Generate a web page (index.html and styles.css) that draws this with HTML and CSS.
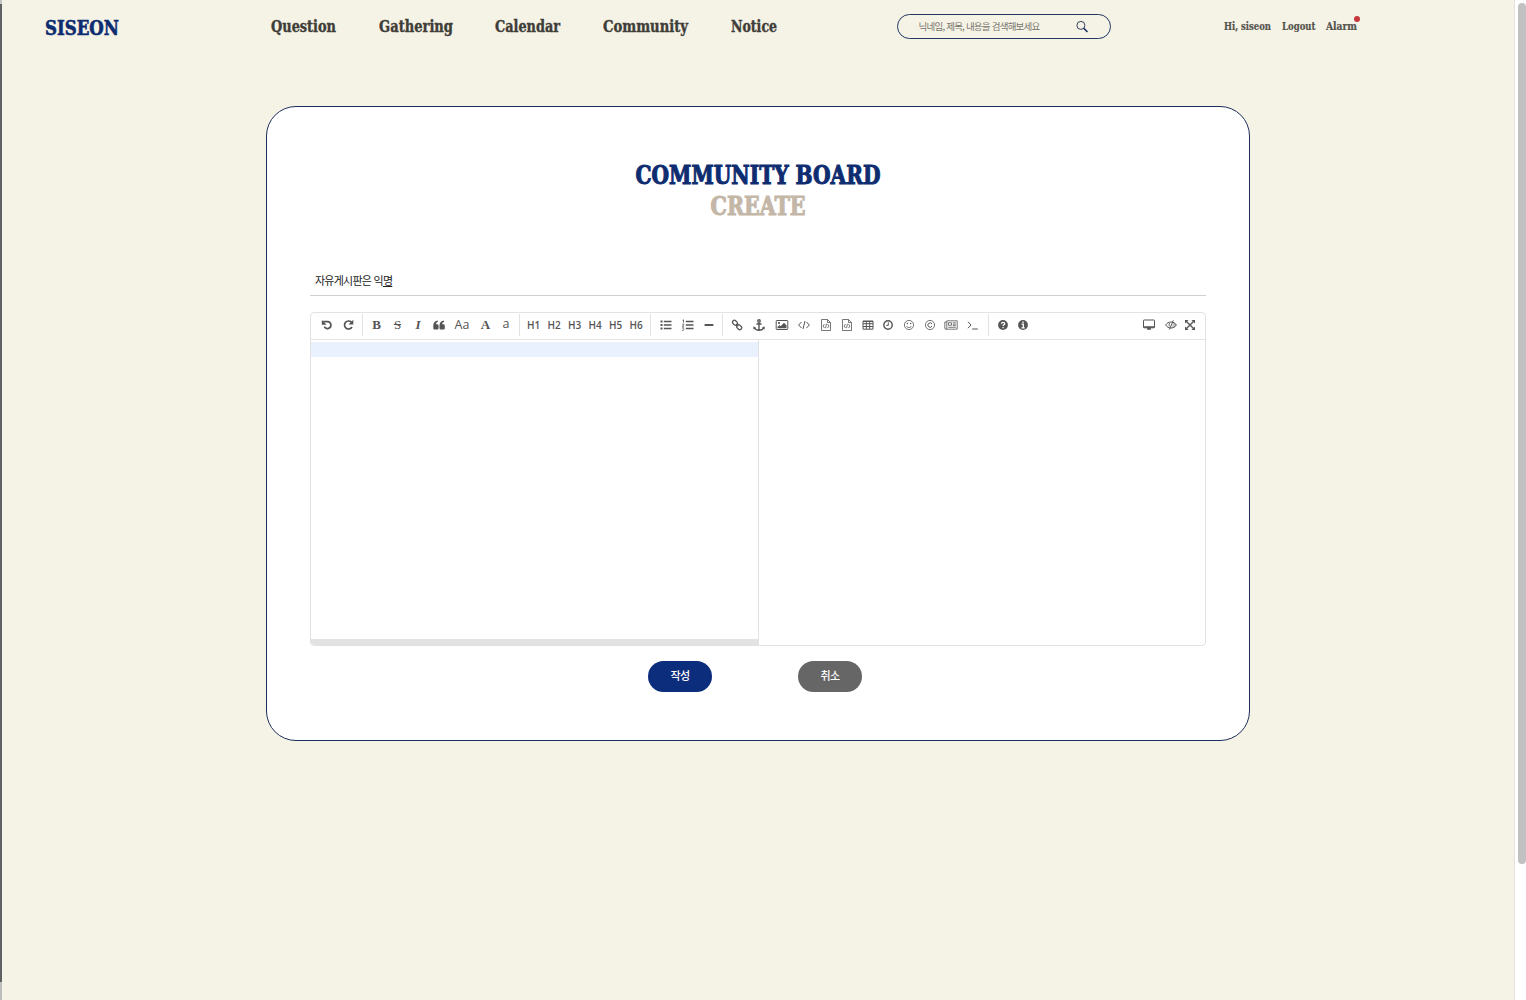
FILE: index.html
```html
<!DOCTYPE html>
<html lang="ko">
<head>
<meta charset="utf-8">
<title>SISEON</title>
<link rel="stylesheet" href="styles.css">
</head>
<body>
<div class="window-edge"></div>
<div class="page">
  <header class="topbar">
    <a class="logo"><svg width="75" height="30"><text x="0" y="22.5" textLength="74" lengthAdjust="spacingAndGlyphs">SISEON</text></svg></a>
    <nav class="menu">
      <a><svg width="66" height="30"><text x="0" y="20" textLength="65" lengthAdjust="spacingAndGlyphs">Question</text></svg></a>
      <a><svg width="74" height="30"><text x="0" y="20" textLength="74" lengthAdjust="spacingAndGlyphs">Gathering</text></svg></a>
      <a><svg width="66" height="30"><text x="0" y="20" textLength="65" lengthAdjust="spacingAndGlyphs">Calendar</text></svg></a>
      <a><svg width="85" height="30"><text x="0" y="20" textLength="85" lengthAdjust="spacingAndGlyphs">Community</text></svg></a>
      <a><svg width="47" height="30"><text x="0" y="20" textLength="46" lengthAdjust="spacingAndGlyphs">Notice</text></svg></a>
    </nav>
    <div class="search">
      <span class="search-hint">닉네임, 제목, 내용을 검색해보세요</span>
      <svg class="search-icon" width="12" height="12" viewBox="0 0 12 12"><circle cx="4.9" cy="4.4" r="4" fill="none" stroke="#34405c"/><path d="M8 7.500l3 3" stroke="#142c66" stroke-width="1.6" stroke-linecap="round"/></svg>
    </div>
    <div class="account">
      <a><svg width="48" height="20"><text x="0" y="14" textLength="47" lengthAdjust="spacingAndGlyphs">Hi, siseon</text></svg></a>
      <a><svg width="34" height="20"><text x="0" y="14" textLength="33.5" lengthAdjust="spacingAndGlyphs">Logout</text></svg></a>
      <a class="alarm"><svg width="31" height="20"><text x="0" y="14" textLength="31" lengthAdjust="spacingAndGlyphs">Alarm</text></svg><i class="dot"></i></a>
    </div>
  </header>

  <main class="card">
    <h1 class="title">
      <svg width="246" height="31"><text class="navy" x="0.5" y="24" textLength="245" lengthAdjust="spacingAndGlyphs">COMMUNITY BOARD</text></svg>
      <svg width="96" height="31"><text class="sand" x="0.5" y="24" textLength="95" lengthAdjust="spacingAndGlyphs">CREATE</text></svg>
    </h1>
    <div class="subject">자유게시판은 익<u>명</u></div>
    <section class="editor">
      <div class="toolbar">
        <div class="tools">
          <svg viewBox="0 0 14 14"><path class="s2" d="M3.2 3.6h4.3a3.5 3.5 0 1 1-3.2 5.1"/><path d="M1.8 2v4.8h4.8z"/></svg>
          <svg viewBox="0 0 14 14"><path class="s2" d="M10.4 4.2A4 4 0 1 0 11 9"/><path d="M12.3 1.8v4.8H7.5z"/></svg>
          <b class="sep"></b>
          <span class="serif">B</span>
          <span class="serif strike">S</span>
          <span class="serif italic">I</span>
          <svg viewBox="0 0 14 14"><path d="M1.3 7.5C1.3 4.5 3 2.6 5.8 2.4v1.7C4.5 4.4 4 5.2 4 6.3h1c1 0 1.6.6 1.6 1.6v2c0 1-.6 1.6-1.6 1.6H2.9c-1 0-1.6-.6-1.6-1.6zM7.5 7.5c0-3 1.7-4.9 4.500-5.100v1.700c-1.300.300-1.800 1.100-1.800 2.200h1c1 0 1.600.6 1.600 1.600v2c0 1-.6 1.600-1.600 1.600H9.100c-1 0-1.600-.6-1.600-1.600z"/></svg>
          <span class="case">Aa</span>
          <span class="serif">A</span>
          <span class="case lower">a</span>
          <b class="sep"></b>
          <span class="hd">H1</span><span class="hd">H2</span><span class="hd">H3</span><span class="hd">H4</span><span class="hd">H5</span><span class="hd">H6</span>
          <b class="sep"></b>
          <svg viewBox="0 0 14 14"><path d="M1.500 2.500h2v2h-2zM1.500 6h2v2h-2zM1.500 9.500h2v2h-2zM4.800 2.700H12.500v1.500H4.800zM4.800 6.200H12.500v1.500H4.800zM4.800 9.700H12.500v1.500H4.800z"/></svg>
          <svg viewBox="0 0 14 14"><path class="s09" d="M1.500 2.300l1-.5v3M1.200 6.200h1.600v.8l-1.500 1.300h1.700M1.200 9.800h1.600l-.7 1 .8.800-.6.800h-1.300"/><path d="M4.800 2.700H12.500v1.500H4.800zM4.800 6.200H12.500v1.500H4.800zM4.800 9.700H12.500v1.500H4.800z"/></svg>
          <svg viewBox="0 0 14 14"><rect x="2.600" y="5.900" width="8.800" height="2.200" rx=".7"/></svg>
          <b class="sep"></b>
          <svg viewBox="0 0 14 14"><g class="link"><rect x="2.300" y="2.900" width="5.400" height="3.800" rx="1.700" transform="rotate(45 5 4.800)"/><rect x="6.500" y="7.300" width="5.400" height="3.800" rx="1.700" transform="rotate(45 9.200 9.200)"/><path d="M6 6l2.300 2.300"/></g></svg>
          <svg viewBox="0 0 14 14"><circle class="s15" cx="7" cy="2.900" r="1.200"/><path class="s15" d="M7 4.200v8M4.400 6h5.200M2.200 9.500c.7 1.700 2.600 2.700 4.800 2.700s4.100-1 4.800-2.700"/><path d="M1.400 8.200v3.200l2.800-1.400zM12.600 8.200v3.200L9.800 10z"/></svg>
          <svg viewBox="0 0 14 14"><rect class="s1" x="1.200" y="2.500" width="11.600" height="9" rx=".6"/><circle cx="4" cy="5" r="1.100"/><path d="M2.500 10.300V9l2-2 1.200 1.200L9 4.800l2.500 2.700v2.800z"/></svg>
          <svg viewBox="0 0 14 14"><path class="s1" d="M4.500 4L1.600 7l2.900 3M9.500 4l2.900 3-2.900 3M8 3L6 11"/></svg>
          <svg viewBox="0 0 14 14"><path class="s09" d="M2.500 1.500h6l3 3v8h-9zM8.500 1.500v3h3M5.500 6L4 8l1.500 2M8.500 6L10 8l-1.500 2M7.500 5.800l-1 4.400"/></svg>
          <svg viewBox="0 0 14 14"><path class="s09" d="M2.500 1.500h6l3 3v8h-9zM8.500 1.500v3h3M5.500 6L4 8l1.500 2M8.500 6L10 8l-1.500 2M7.500 5.800l-1 4.400"/></svg>
          <svg viewBox="0 0 14 14"><path class="s1" d="M2 3h10v8.200H2zM2 5.700h10M2 8.500h10M5.300 3v8M8.700 3v8M2 3.500h10"/></svg>
          <svg viewBox="0 0 14 14"><circle class="s15" cx="7" cy="7" r="4.200"/><path class="s1" d="M7.300 4.400v3H5.200"/></svg>
          <svg viewBox="0 0 14 14"><circle class="s09" cx="7" cy="7" r="4.600"/><circle cx="5.400" cy="5.500" r=".75"/><circle cx="8.600" cy="5.500" r=".75"/><path class="s09" d="M4.500 8c.8 2.100 4.200 2.100 5 0"/></svg>
          <svg viewBox="0 0 14 14"><circle class="s09" cx="7" cy="7" r="4.600"/><path class="s1" d="M9 5.900A2.200 2.200 0 1 0 9 8.200"/></svg>
          <svg viewBox="0 0 14 14"><path class="s09" d="M2.800 2.800h10.400v8.400H1.800c-.6 0-1-.4-1-1V4h2zM2.800 4v6.200c0 .6-.4 1-1 1M4.500 4.700h3v2.600h-3zM8.800 4.800h3M8.800 6.200h3M8.800 7.600h3M4.300 9.300h7.500"/></svg>
          <svg viewBox="0 0 14 14"><path class="s1" d="M2 3.800L5 7l-3 3.200M6.200 11h5.600"/></svg>
          <b class="sep"></b>
          <svg viewBox="0 0 14 14"><circle cx="7" cy="7" r="4.900"/><path class="w" d="M5.400 5.700c.1-1.900 3.300-1.900 3.300 0 0 1.100-1.600 1.200-1.600 2.300M7.100 8.900v1.400"/></svg>
          <svg viewBox="0 0 14 14"><circle cx="7" cy="7" r="4.900"/><path class="w" d="M7 3.500v1.400M5.600 6.200h1.700v3.500M5.500 9.800h3.200"/></svg>
        </div>
        <div class="modes">
          <svg viewBox="0 0 14 14"><rect class="s1" x="1.500" y="2" width="11" height="7.800" rx=".6"/><path d="M1.500 8.200h11v1.500h-11zM5.500 9.700h3l.6 2H4.900z"/></svg>
          <svg viewBox="0 0 14 14"><path class="s1" d="M1.700 7c2.200-4 8.400-4 10.600 0-2.200 4-8.400 4-10.600 0zM9.300 2.500L5.400 11.500M6 5C4.800 5.700 4.800 7.400 5.800 8.400"/><path d="M9.200 4.500c2 .6 2.800 1.500 3.300 2.500-.8 1.500-2.500 2.700-4.800 2.900z" opacity=".35"/></svg>
          <svg viewBox="0 0 14 14"><path class="s15" d="M3.500 3.500l7 7M10.500 3.500l-7 7"/><path d="M2 2h3.600L2 5.600zM12 2v3.600L8.400 2zM2 12V8.400L5.600 12zM12 12H8.400L12 8.400z"/></svg>
        </div>
      </div>
      <div class="panes">
        <div class="source"><div class="active-line"></div><div class="hscroll"></div></div>
        <div class="preview"></div>
      </div>
    </section>
    <div class="actions">
      <button class="btn primary">작성</button>
      <button class="btn">취소</button>
    </div>
  </main>
</div>
<div class="scrollbar"><div class="thumb"></div></div>
</body>
</html>
```
FILE: styles.css
```css
* { box-sizing: border-box; }
body {
  margin: 0;
  height: 1000px;
  display: flex;
  overflow: hidden;
  background: #f5f3e6;
  font-family: "Noto Sans CJK KR", sans-serif;
}
svg { display: block; overflow: visible; }

.window-edge {
  width: 2px;
  background: linear-gradient(#c4c4c4 0 4px, #606164 4px 982px, #bdbdbd 982px);
}
.page { flex: 1; }

/* header */
.topbar { display: flex; height: 54px; padding-left: 42.5px; }
.topbar, .title { font-family: "DejaVu Serif Condensed", "DejaVu Serif", serif; font-stretch: condensed; font-weight: 700; }
.logo { width: 226px; padding-top: 12px; font-size: 20.5px; }
.logo text { fill: #0e2c70; stroke: #0e2c70; stroke-width: .6px; }
.menu { display: flex; gap: 42.3px; width: 626px; padding-top: 12px; font-size: 17px; }
.menu text { fill: #3f3d38; stroke: #3f3d38; stroke-width: .4px; }
.search {
  display: flex;
  align-items: center;
  justify-content: space-between;
  width: 214px;
  height: 25px;
  margin-top: 14px;
  padding: 0 22px 0 21px;
  border: 1px solid #223863;
  border-radius: 13px;
}
.search-hint {
  padding-bottom: 1px;
  font: 400 9.5px "Noto Sans CJK KR", sans-serif;
  letter-spacing: -0.77px;
  color: #77756e;
  white-space: nowrap;
}
.account { display: flex; gap: 10px; margin-left: 113.5px; padding-top: 16px; font-size: 11px; }
.account text { fill: #55534e; stroke: #55534e; stroke-width: .2px; }
.alarm { position: relative; }
.dot { position: absolute; left: 27.5px; top: 0; width: 6px; height: 6px; border-radius: 50%; background: #c4373c; }

/* board card */
.card {
  width: 984px;
  height: 635px;
  margin: 52px 0 0 264px;
  padding: 53px 43px 0;
  background: #fff;
  border: 1px solid #1b2d5b;
  border-radius: 30px;
}
.title { display: flex; flex-direction: column; align-items: center; margin: 0; font-size: 25.5px; }
.navy { fill: #0e2c70; stroke: #0e2c70; stroke-width: 1px; }
.sand { fill: #c4b7a7; stroke: #c4b7a7; stroke-width: 1px; }
.subject {
  height: 29px;
  margin-top: 45px;
  padding: 0 5px;
  border-bottom: 1px solid #cfcfcf;
  font-size: 11px;
  line-height: 26px;
  letter-spacing: -0.75px;
  color: #222;
}
.title + .subject { transform: none; }
.subject u { text-underline-offset: 1px; }

/* markdown editor */
.editor {
  height: 334px;
  margin-top: 16px;
  border: 1px solid #e2e2e2;
  border-radius: 4px;
  overflow: hidden;
}
.toolbar {
  display: flex;
  justify-content: space-between;
  height: 27px;
  padding: 0 6px 2px 5px;
  border-bottom: 1px solid #e4e4e4;
  color: #555;
  fill: #555;
}
.tools, .modes { display: grid; align-items: center; justify-items: center; }
.tools {
  grid-template-columns:
    21px 21px 8px
    21px 21px 20px 21px 26px 21px 20px 7px
    21px 20px 21px 20px 21px 20px 8px
    23px 22px 20px 7px
    22px 22px 23px 22px 21px 21px 21px 20px 21px 21px 22px 22px 8px
    21px 20px;
}
.modes { grid-template-columns: 23px 21px 18px; }
.toolbar svg { width: 14px; height: 14px; }
.sep { width: 1px; height: 22px; background: #e2e2e2; }
.s09, .s1, .s15, .s2, .link, .w { fill: none; stroke: #555; }
.s09 { stroke-width: .8; }
.s1 { stroke-width: 1; }
.s15 { stroke-width: 1.4; }
.s2 { stroke-width: 1.7; }
.link { stroke-width: 1.3; }
.w { stroke: #fff; stroke-width: 1.3; }
.serif { font: 700 13px/14px "Liberation Serif", serif; }
.strike { font-weight: 400; text-decoration: line-through; padding: 0 1.5px; }
.italic { font-style: italic; }
.case { font: 400 12.5px/14px "Open Sans", sans-serif; padding-bottom: 1px; }
.lower { padding-bottom: 2px; }
.hd { font: 600 10px/14px "Open Sans", sans-serif; }
.panes { display: flex; height: 305px; }
.source { display: flex; flex-direction: column; justify-content: space-between; width: 448px; padding-top: 2px; border-right: 1px solid #e2e2e2; }
.active-line { height: 15px; background: #e8f1fd; }
.hscroll { height: 6px; background: #e2e2e2; }
.preview { flex: 1; }

/* buttons */
.actions { display: flex; gap: 86px; margin: 15px 0 0 338px; }
.btn {
  width: 64px;
  height: 31px;
  padding: 0 0 3px;
  border: 0;
  border-radius: 16px;
  background: #666;
  color: #fff;
  font: 500 11px "Noto Sans CJK KR", sans-serif;
  letter-spacing: -0.6px;
}
.primary { background: #0c2d7c; }

/* page scrollbar */
.scrollbar { width: 12px; padding: 3px 0 0 3px; background: #fff; border-left: 1px solid #e4e2da; }
.thumb { height: 861px; border-radius: 4px; background: #c1c1c1; }
```
